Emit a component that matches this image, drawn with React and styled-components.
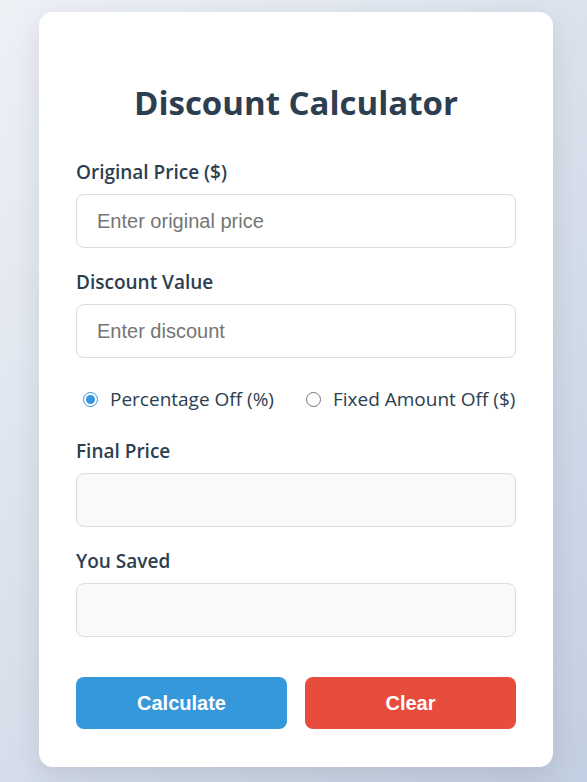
import { useState } from 'react'
import styled, { createGlobalStyle } from 'styled-components'

const GlobalStyle = createGlobalStyle`
    * {
        box-sizing: border-box;
    }

    body {
        margin: 0;
        min-height: 100vh;
        font-family: "Open Sans", "Noto Sans", sans-serif;
        background: linear-gradient(135deg, #eef1f6 0%, #c3cfe2 100%);
        background-attachment: fixed;
    }
`

const App = () => {
    const [price, setPrice] = useState('')
    const [discount, setDiscount] = useState('')
    const [type, setType] = useState('percent')
    const [finalPrice, setFinalPrice] = useState('')
    const [saved, setSaved] = useState('')

    const calculate = () => {
        const p = parseFloat(price)
        const d = parseFloat(discount)
        if (isNaN(p) || isNaN(d)) return
        const off = type === 'percent' ? (p * d) / 100 : d
        setFinalPrice('$' + (p - off).toFixed(2))
        setSaved('$' + off.toFixed(2))
    }

    const clear = () => {
        setPrice('')
        setDiscount('')
        setFinalPrice('')
        setSaved('')
    }

    return (
        <Page>
            <GlobalStyle />
            <Card>
                <Title>Discount Calculator</Title>

                <Group>
                    <Label>Original Price ($)</Label>
                    <Input
                        type="number"
                        placeholder="Enter original price"
                        value={price}
                        onChange={(e) => setPrice(e.target.value)}
                    />
                </Group>

                <Group>
                    <Label>Discount Value</Label>
                    <Input
                        type="number"
                        placeholder="Enter discount"
                        value={discount}
                        onChange={(e) => setDiscount(e.target.value)}
                    />
                </Group>

                <RadioRow>
                    <RadioLabel>
                        <input
                            type="radio"
                            name="type"
                            checked={type === 'percent'}
                            onChange={() => setType('percent')}
                        />
                        Percentage Off (%)
                    </RadioLabel>
                    <RadioLabel>
                        <input
                            type="radio"
                            name="type"
                            checked={type === 'fixed'}
                            onChange={() => setType('fixed')}
                        />
                        Fixed Amount Off ($)
                    </RadioLabel>
                </RadioRow>

                <Group>
                    <Label>Final Price</Label>
                    <Input readOnly $result value={finalPrice} />
                </Group>

                <Group>
                    <Label>You Saved</Label>
                    <Input readOnly $result value={saved} />
                </Group>

                <Buttons>
                    <Button $color="#3498db" onClick={calculate}>Calculate</Button>
                    <Button $color="#e74c3c" onClick={clear}>Clear</Button>
                </Buttons>
            </Card>
        </Page>
    )
}

export default App

const Page = styled.div`
    padding: 12px 34px 15px 39px;
`

const Card = styled.div`
    background-color: #fff;
    border-radius: 14px;
    padding: 37px 37px 38px;
    box-shadow: 0 10px 30px rgba(0, 0, 0, 0.1);
`

const Title = styled.h1`
    margin: 30px 0 33px;
    text-align: center;
    color: #2c3e50;
    font-size: 33px;
    font-weight: 700;
    line-height: 48px;
`

const Group = styled.div`
    margin-bottom: 22px;
`

const Label = styled.label`
    display: block;
    margin-bottom: 10px;
    color: #2c3e50;
    font-size: 19px;
    font-weight: 600;
    line-height: 24px;
`

const Input = styled.input`
    display: block;
    width: 100%;
    height: 54px;
    padding: 0 20px;
    border: 1px solid #ddd;
    border-radius: 8px;
    background-color: ${(props) => (props.$result ? '#f8f9fa' : '#fff')};
    font-family: "Liberation Sans", Arial, sans-serif;
    font-size: 20px;
    color: #333;
    outline: none;

    &::placeholder {
        color: #757575;
    }

    &::-webkit-outer-spin-button,
    &::-webkit-inner-spin-button {
        -webkit-appearance: none;
        margin: 0;
    }
`

const RadioRow = styled.div`
    display: flex;
    align-items: center;
    gap: 27px;
    height: 38px;
    margin-bottom: 21px;
    padding-left: 2px;
`

const RadioLabel = styled.label`
    display: flex;
    align-items: center;
    gap: 12px;
    color: #2c3e50;
    font-size: 19px;
    cursor: pointer;

    input {
        margin: 0 0 0 5px;
        width: 15px;
        height: 15px;
        accent-color: #3498db;
    }
`

const Buttons = styled.div`
    display: grid;
    grid-template-columns: 1fr 1fr;
    gap: 18px;
    margin-top: 40px;
`

const Button = styled.button`
    height: 52px;
    border: none;
    border-radius: 8px;
    background-color: ${(props) => props.$color};
    color: #fff;
    font-family: "Liberation Sans", Arial, sans-serif;
    font-size: 20px;
    font-weight: 700;
    cursor: pointer;
`
